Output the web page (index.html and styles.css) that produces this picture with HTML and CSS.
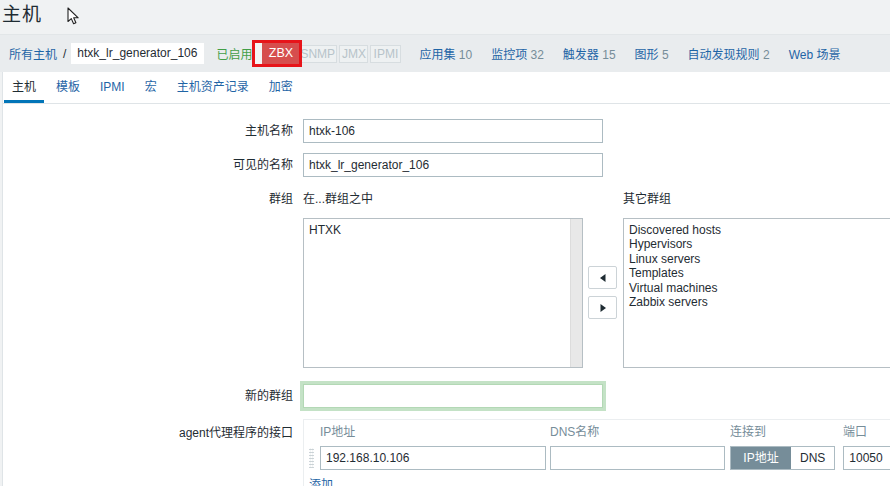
FILE: index.html
```html
<!DOCTYPE html>
<html lang="zh">
<head>
<meta charset="utf-8">
<title>主机</title>
<link rel="stylesheet" href="styles.css">
</head>
<body>
<div class="page">
  <header class="title-row">
    <h1 class="title">主机</h1>
    <svg class="cursor" width="14" height="18" viewBox="0 0 14 18">
      <path d="M1 1 L1 14.5 L4.3 11.6 L6.6 16.8 L8.9 15.8 L6.7 10.8 L11.2 10.8 Z" fill="#fff" stroke="#222" stroke-width="1.1" stroke-linejoin="round"/>
    </svg>
  </header>

  <nav class="host-nav">
    <a class="link crumb">所有主机</a>
    <span class="sep">/</span>
    <span class="crumb-current">htxk_lr_generator_106</span>
    <span class="enabled">已启用</span>
    <span class="mark">
      <span class="mark-gap"></span>
      <span class="badge-zbx">ZBX</span>
    </span>
    <span class="status off snmp">SNMP</span>
    <span class="status off jmx">JMX</span>
    <span class="status off ipmi">IPMI</span>
    <a class="link nav-item first">应用集 <span class="num">10</span></a>
    <a class="link nav-item">监控项 <span class="num">32</span></a>
    <a class="link nav-item">触发器 <span class="num">15</span></a>
    <a class="link nav-item">图形 <span class="num">5</span></a>
    <a class="link nav-item">自动发现规则 <span class="num">2</span></a>
    <a class="link nav-item">Web 场景</a>
  </nav>

  <main class="content">
    <ul class="tabs">
      <li class="tab active">主机</li>
      <li class="tab">模板</li>
      <li class="tab">IPMI</li>
      <li class="tab">宏</li>
      <li class="tab">主机资产记录</li>
      <li class="tab">加密</li>
    </ul>

    <form class="form">
      <div class="row">
        <label class="label">主机名称</label>
        <div class="field"><input class="input w300" value="htxk-106"></div>
      </div>
      <div class="row">
        <label class="label">可见的名称</label>
        <div class="field"><input class="input w300" value="htxk_lr_generator_106"></div>
      </div>
      <div class="row groups-row">
        <label class="label label-top">群组</label>
        <div class="field groups">
          <div class="group-col">
            <div class="group-head">在...群组之中</div>
            <div class="listbox left">
              <div class="list-items">
                <div>HTXK</div>
              </div>
              <div class="scrolltrack"></div>
            </div>
          </div>
          <div class="move-btns">
            <button type="button" class="move-btn">
              <svg width="6" height="8" viewBox="0 0 6 8"><path d="M5.5 0 L0 4 L5.5 8 Z" fill="#1f2c33"/></svg>
            </button>
            <button type="button" class="move-btn">
              <svg width="6" height="8" viewBox="0 0 6 8"><path d="M0.5 0 L6 4 L0.5 8 Z" fill="#1f2c33"/></svg>
            </button>
          </div>
          <div class="group-col">
            <div class="group-head">其它群组</div>
            <div class="listbox right">
              <div class="list-items">
                <div>Discovered hosts</div>
                <div>Hypervisors</div>
                <div>Linux servers</div>
                <div>Templates</div>
                <div>Virtual machines</div>
                <div>Zabbix servers</div>
              </div>
            </div>
          </div>
        </div>
      </div>
      <div class="row newgroup-row">
        <label class="label">新的群组</label>
        <div class="field"><input class="input w300 focused" value=""></div>
      </div>
      <div class="row iface-row">
        <label class="label label-iface">agent代理程序的接口</label>
        <div class="field">
          <div class="iface">
            <div class="iface-head">
              <span class="c-ip">IP地址</span>
              <span class="c-dns">DNS名称</span>
              <span class="c-conn">连接到</span>
              <span class="c-port">端口</span>
            </div>
            <div class="iface-line">
              <span class="drag"></span>
              <input class="input ip" value="192.168.10.106">
              <input class="input dns" value="">
              <span class="toggle">
                <span class="tg on">IP地址</span>
                <span class="tg">DNS</span>
              </span>
              <input class="input port" value="10050">
            </div>
            <a class="link add">添加</a>
          </div>
        </div>
      </div>
    </form>
  </main>
</div>
</body>
</html>
```

FILE: styles.css
```css
* { box-sizing: border-box; }

html, body {
  margin: 0;
  padding: 0;
  background: #f0f2f3;
  overflow: hidden;
}

body {
  font-family: "Liberation Sans", Arial, "Noto Sans CJK SC", sans-serif;
  font-size: 12px;
  color: #1f2c33;
}

.page {
  width: 1000px;
}

.link {
  color: #1f65a6;
  text-decoration: none;
}

/* title */
.title-row {
  height: 34px;
  display: flex;
  align-items: flex-start;
  padding-left: 2px;
}

.title {
  margin: 0;
  padding-top: 4px;
  font-size: 19px;
  font-weight: normal;
  line-height: 22px;
  color: #1f2c33;
  letter-spacing: 1px;
}

.cursor {
  margin-left: 25px;
  margin-top: 7px;
}

/* host nav */
.host-nav {
  height: 38px;
  display: flex;
  align-items: center;
  background: #e9ecee;
  border-top: 1px solid #e2e6e8;
  padding-left: 9px;
  white-space: nowrap;
}

.sep {
  margin: 0 5px 0 6px;
  color: #1f2c33;
}

.crumb-current {
  background: #fff;
  height: 21px;
  line-height: 21px;
  padding: 0 7px 0 6px;
}

.enabled {
  color: #429e47;
  margin-left: 12px;
  width: 36px;
  flex: none;
}

.mark {
  display: flex;
  height: 27px;
  width: 50px;
  flex: none;
  margin-left: 0;
  border: 3px solid #e7141a;
  position: relative;
  z-index: 2;
}

.mark-gap {
  width: 7px;
  background: #f4f5f5;
}

.badge-zbx {
  flex: 1;
  background: #d64e4e;
  color: #fff;
  font-size: 12.5px;
  line-height: 21px;
  text-align: center;
}

.status {
  height: 18px;
  line-height: 16px;
  border: 1px solid #d7dde0;
  color: #b7c3c9;
  margin-left: 2px;
  background: #eef1f2;
  text-align: center;
  flex: none;
}

.status.snmp {
  margin-left: -3px;
  width: 38px;
  text-align: right;
  padding-right: 2px;
}

.status.jmx { width: 29px; }
.status.ipmi { width: 31px; }

.nav-item {
  margin-left: 19px;
}

.nav-item.first {
  margin-left: 18px;
}

.num {
  color: #768d99;
}

/* content */
.content {
  margin-left: 2px;
  background: #fff;
  border-left: 1px solid #dfe4e7;
  min-height: 420px;
}

.tabs {
  list-style: none;
  margin: 0;
  padding: 0 0 0 1px;
  height: 32px;
  display: flex;
  border-bottom: 1px solid #dfe4e7;
}

.tab {
  padding: 2px 8px 0;
  margin-right: 4px;
  line-height: 27px;
  color: #1f65a6;
  border-bottom: 3px solid transparent;
}

.tab.active {
  color: #1f2c33;
  border-bottom-color: #0275b8;
}

/* form */
.form {
  padding-top: 15px;
}

.row {
  display: flex;
  margin-bottom: 10px;
}

.label {
  width: 290px;
  text-align: right;
  line-height: 24px;
  flex: none;
}

.field {
  margin-left: 10px;
}

.input {
  font-family: "Liberation Sans", Arial, "Noto Sans CJK SC", sans-serif;
  font-size: 12px;
  color: #1f2c33;
  height: 24px;
  border: 1px solid #acbbc2;
  padding: 0 5px;
  background: #fff;
  outline: none;
  margin: 0;
}

.w300 { width: 300px; }

.input.focused {
  box-shadow: 0 0 0 3px #c4e2c6;
  border-color: #b3d8b5;
}

/* groups */
.groups-row {
  margin-bottom: 16px;
}

.groups {
  display: flex;
  align-items: flex-start;
}

.group-head {
  height: 24px;
  line-height: 24px;
  margin-bottom: 7px;
}

.listbox {
  height: 150px;
  border: 1px solid #b6bfc4;
  background: #fff;
  display: flex;
}

.listbox.left { width: 280px; }
.listbox.right { width: 280px; }

.list-items {
  flex: 1;
  padding: 4px 5px;
  line-height: 14.4px;
}

.scrolltrack {
  width: 12px;
  background: #e8e8e8;
  border-left: 1px solid #dcdcdc;
}

.move-btns {
  display: flex;
  flex-direction: column;
  margin: 79px 6px 0 5px;
}

.move-btn {
  width: 29px;
  height: 23px;
  border: 1px solid #ccd3d7;
  border-radius: 2px;
  background: #fff;
  margin: 0 0 7px 0;
  padding: 0;
  display: flex;
  align-items: center;
  justify-content: center;
}

/* new group */
.newgroup-row {
  margin-bottom: 11px;
}

/* interface */
.label-iface {
  padding-top: 2px;
}

.iface {
  width: 620px;
  border-top: 1px solid #ebeef0;
  border-left: 1px solid #ebeef0;
  padding: 0 0 0 5px;
  height: 80px;
}

.iface-head {
  display: flex;
  height: 26px;
  line-height: 24px;
  color: #768d99;
  padding-left: 11px;
}

.c-ip { width: 230px; }
.c-dns { width: 180px; }
.c-conn { width: 113px; }

.iface-line {
  display: flex;
  align-items: center;
  height: 24px;
}

.drag {
  width: 5px;
  height: 20px;
  margin-right: 6px;
  background-image: radial-gradient(circle, #c8d0d4 0.8px, transparent 1.1px);
  background-size: 2.5px 3px;
}

.input.ip { width: 226px; }
.input.dns { width: 175px; margin-left: 4px; }
.input.port { width: 60px; margin-left: 8px; }

.toggle {
  display: flex;
  margin-left: 5px;
  height: 24px;
  border: 1px solid #acbbc2;
}

.tg {
  line-height: 22px;
  padding: 0 9px;
  color: #1f2c33;
  background: #fff;
}

.tg.on {
  background: #768d99;
  color: #fff;
  width: 60px;
  text-align: center;
}

.add {
  display: block;
  margin-top: 8px;
  line-height: 14px;
}
```
